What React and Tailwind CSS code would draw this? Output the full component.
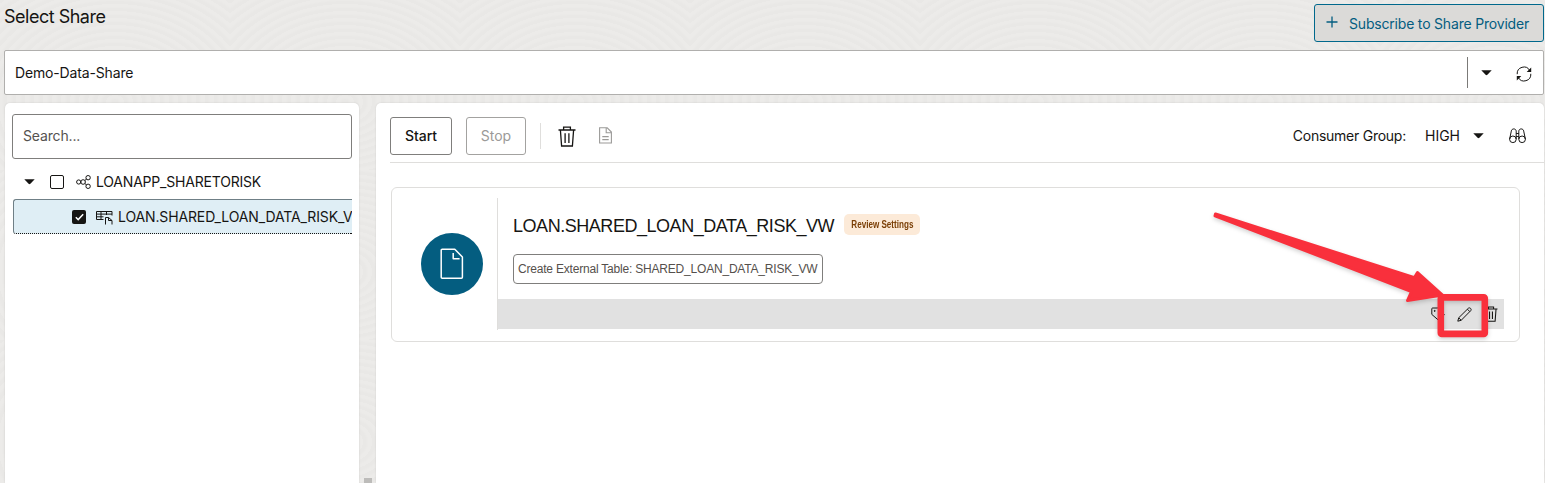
import React from "react";

const inter = "font-[Inter,'Liberation_Sans',sans-serif]";
const helv = "font-['Liberation_Sans',Arial,sans-serif]";

function Caret() {
  return (
    <svg width="11" height="6" viewBox="0 0 11 6" className="block shrink-0">
      <path d="M0.3 0.2h10.400L6.400 4.800q-.9.9-1.800 0z" fill="#161513" />
    </svg>
  );
}

function TrashIcon({ w, h, stroke = 1.3 }) {
  return (
    <svg width={w} height={h} viewBox="0 0 18 21" fill="none" stroke="#161513" strokeWidth={stroke} className="block shrink-0">
      <path d="M0.5 4h17M5.6 4V1.2h6.8V4M2.4 4l1.2 16h10.8l1.2-16M7.1 7.3v9.6M10.9 7.3v9.6" />
    </svg>
  );
}

function RefreshIcon() {
  return (
    <svg width="16" height="16" viewBox="0 0 16 16" fill="none" stroke="#161513" strokeWidth="1" className="block shrink-0">
      <path d="M1.2 8.2A6.7 6.7 0 0 1 13.8 4.6M14.8 7.8A6.7 6.7 0 0 1 2.2 11.4" />
      <path d="M15.200 1.400v4.500h-4.500zM.8 14.600v-4.500h4.500z" fill="#161513" stroke="none" />
    </svg>
  );
}

function ShareIcon() {
  return (
    <svg width="15" height="14" viewBox="0 0 15 14" fill="none" stroke="#161513" strokeWidth="1" className="block shrink-0">
      <circle cx="2.700" cy="7" r="2.100" />
      <circle cx="7.100" cy="7" r="2.300" />
      <circle cx="12.100" cy="2.700" r="2.200" />
      <circle cx="12.100" cy="11.300" r="2.200" />
      <path d="M8.800 5.500l1.700-1.400M8.800 8.500l1.700 1.400" />
    </svg>
  );
}

function TableIcon() {
  return (
    <svg width="17" height="15" viewBox="0 0 17 15" fill="none" stroke="#161513" strokeWidth="1" className="block shrink-0">
      <path d="M7.500 9.500H.500V1.500h15.500v4M.500 4.100h15.500M.500 6.800h7M5 1.500v8M10.500 1.500v3.500" />
      <path d="M9.500 14.500V7.500h3l3.500 3v4M12.500 7.500v3H16" />
    </svg>
  );
}

function DocIcon() {
  return (
    <svg width="13" height="17" viewBox="0 0 13 17" fill="none" stroke="#9b9a98" strokeWidth="1.1" className="block shrink-0">
      <path d="M.6.8h7.6l4.2 4.2v11H.6zM7.2.8v5h5.2M3.3 9.6h6.4M3.3 12.6h6.4" />
    </svg>
  );
}

function BinocularsIcon() {
  return (
    <svg width="17" height="16" viewBox="0 0 17 16" fill="none" stroke="#161513" strokeWidth="1" className="block shrink-0">
      <circle cx="3.900" cy="11.300" r="3.300" />
      <circle cx="13.100" cy="11.300" r="3.300" />
      <path d="M.6 11.2L2.3 3.1C2.6.2 7 .2 7.2 3.1v8M16.4 11.2L14.7 3.1C14.4.2 10 .2 9.8 3.1v8M7.2 5.500h2.6M7.2 8.500h2.6" />
    </svg>
  );
}

function TagIcon() {
  return (
    <svg width="15" height="15" viewBox="0 0 15 15" fill="none" stroke="#161513" strokeWidth="1" className="block shrink-0">
      <path d="M1.600 1h5.100l6.700 6.6-5.700 5.8L.8 7.400V1.800q0-.8.8-.8z" />
      <circle cx="3.700" cy="3.900" r=".5" fill="#161513" />
    </svg>
  );
}

function PencilIcon() {
  return (
    <svg width="15" height="15" viewBox="0 0 15 15" fill="none" stroke="#161513" strokeWidth="1" strokeLinejoin="round" className="block shrink-0">
      <path d="M.8 14.200l.9-3.400L11.300 1.300c1.500-1.400 3.800.9 2.400 2.400l-9.500 9.600zM10.400 2.200l2.400 2.400M1.700 10.800l2.500 2.500" />
    </svg>
  );
}

function FileIcon() {
  return (
    <svg width="24" height="32" viewBox="0 0 24 32" fill="none" stroke="#fff" strokeWidth="1.5" strokeLinejoin="round" className="block">
      <path d="M2.2 1.2h12.6L22.4 9v20.200a1 1 0 0 1-1 1H2.200a1 1 0 0 1-1-1V2.2a1 1 0 0 1 1-1zM13.2 5v5.8h6.4" />
    </svg>
  );
}

function Annotation() {
  return (
    <svg width="290" height="140" viewBox="0 0 290 140" className="absolute left-[831px] top-[102px] pointer-events-none drop-shadow-[0_2px_2px_rgba(0,0,0,0.18)]">
      <path d="M8.500 9L207.500 72.600L210.500 67.500L235.500 90L200.500 95.500L204.500 86.500L8 10.800Z" fill="#f9303c" stroke="#f9303c" strokeWidth="3" strokeLinejoin="round" />
      <rect x="233.800" y="92.400" width="44" height="36.500" rx="1" fill="none" stroke="#f9303c" strokeWidth="6.600" />
    </svg>
  );
}

export default function App() {
  return (
    <div className={`${inter} flex h-[483px] w-[1545px] flex-col overflow-hidden bg-[#ecebe9] bg-[repeating-radial-gradient(ellipse_90px_70px_at_50%_60%,rgba(0,0,0,0.010)_0_3px,transparent_6px_9px)] bg-[length:230px_170px] text-[#161513]`}>
      <header className="flex h-[50px] shrink-0 items-start justify-between pl-1 pr-px">
        <h1 className="mt-[5px] text-[18px] leading-6 tracking-[-0.5px]">Select Share</h1>
        <button className="mt-1 flex h-[38px] w-[230px] items-center rounded-[3px] border border-[#00688c] bg-[#dbdad8] pl-[11px] text-[14px] text-[#045d80]">
          <svg width="12" height="12" viewBox="0 0 12 12" className="mb-0.5 mr-[11px]"><path d="M6 .5v11M.5 6h11" stroke="#045d80" strokeWidth="1.3" /></svg>
          <span className="whitespace-nowrap tracking-[-0.19px]">Subscribe to Share Provider</span>
        </button>
      </header>

      <div className="ml-1 mr-px flex h-[45px] shrink-0 items-center rounded-[2px] border border-[#b0afad] bg-white pl-2.5">
        <span className="text-[14px] tracking-[-0.15px]">Demo-Data-Share</span>
        <div className="ml-auto mr-[13px] h-[31px] w-px bg-[#7b7a78]" />
        <Caret />
        <div className="ml-6 mr-[11px] mt-0.5"><RefreshIcon /></div>
      </div>

      <main className="mt-2 flex min-h-0 flex-1 pl-[5px] pr-px">
        <aside className="h-full w-[354px] shrink-0 rounded-t-[5px] bg-white pl-[7px] pr-2 pt-[11px] shadow-[0_0_2px_rgba(0,0,0,0.12)]">
          <div className="flex h-[45px] w-[340px] items-center rounded-[3px] border border-[#7f7e7c] pb-0.5 pl-2.5 text-[14px] tracking-[-0.15px] text-[#55524f]">Search...</div>
          <div className="flex h-10 items-center pt-[6px] pl-3">
            <Caret />
            <div className="ml-[15px] h-3.5 w-3.5 rounded-[2px] border-[1.500px] border-[#161513]" />
            <div className="ml-3"><ShareIcon /></div>
            <span className="mb-px ml-[5px] text-[14px] tracking-[-0.2px]">LOANAPP_SHARETORISK</span>
          </div>
          <div className="ml-px flex h-[35px] w-[339px] items-center overflow-hidden rounded-l-[3px] border border-b border-r-0 border-[#6f7f86] border-b-[#161513] [border-bottom-style:dotted] bg-[#dfeef5] pl-[58px]">
            <div className="flex h-3.5 w-3.5 shrink-0 items-center justify-center rounded-[2px] bg-[#161513]">
              <svg width="9" height="8" viewBox="0 0 9 8"><path d="M.8 4.2l2.400 2.400L8.200 1.300" fill="none" stroke="#fff" strokeWidth="1.500" /></svg>
            </div>
            <div className="ml-2.5 mt-0.5"><TableIcon /></div>
            <span className="ml-[5px] whitespace-nowrap text-[14px] tracking-[-0.13px]">LOAN.SHARED_LOAN_DATA_RISK_V</span>
          </div>
        </aside>

        <div className="flex w-[17px] shrink-0 items-end justify-center"><div className="h-[5px] w-2 bg-[#bdbcba]" /></div>

        <section className="relative min-w-0 flex-1 rounded-t-[5px] bg-white pl-3.5 pt-3.5 shadow-[0_0_2px_rgba(0,0,0,0.12)]">
          <div className="flex h-[46px] items-start border-b border-[#dfdedc]">
            <button className="h-[38px] w-[62px] rounded-[3px] border border-[#7f7e7c] pb-0.5 text-[14px] font-medium">Start</button>
            <button className="ml-3.5 h-[38px] w-[60px] rounded-[3px] border border-[#a3a2a0] pb-0.5 text-[14px] text-[#9b9a98]">Stop</button>
            <div className="ml-3.5 mt-1.5 h-[26px] w-px bg-[#dfdedc]" />
            <div className="ml-[17px] mt-[9px]"><TrashIcon w="18" h="21" /></div>
            <div className="ml-[23px] mt-2.5"><DocIcon /></div>
            <div className="ml-auto mr-[18px] flex h-[38px] items-center text-[14px]">
              <span className="mb-0.5 tracking-[-0.25px]">Consumer Group:</span>
              <span className="mb-0.5 ml-[19px] mr-[13px]">HIGH</span>
              <Caret />
              <div className="ml-[25px]"><BinocularsIcon /></div>
            </div>
          </div>

          <article className={`${helv} ml-px mt-6 flex h-[155px] w-[1129px] rounded-[6px] border border-[#dfdedc] pl-3 pt-2.5`}>
            <div className="flex h-[132px] w-[94px] items-center justify-center border-r border-[#dfdedc] pl-0.5">
              <div className="flex h-[62px] w-[62px] items-center justify-center rounded-full bg-[#045d80]"><FileIcon /></div>
            </div>
            <div className="flex h-[131px] w-[1006px] flex-col">
              <div className="flex h-[56px] items-center pl-[15px]">
                <span className="w-[321px] whitespace-nowrap text-[18px] tracking-[-0.46px]">LOAN.SHARED_LOAN_DATA_RISK_VW</span>
                <span className="ml-2.5 mb-[3px] flex h-[21px] w-[76px] items-center justify-center rounded-[5px] bg-[#fcead8] text-[10px] font-bold text-[#7a3e05]">
                  <span className="shrink-0 scale-x-[0.81] whitespace-nowrap">Review Settings</span>
                </span>
              </div>
              <div className="ml-[15px] flex h-[30px] w-[310px] items-center whitespace-nowrap rounded-[4px] border border-[#7f7e7c] pl-1 text-[12px] tracking-[-0.2px] text-[#55504c]">Create External Table: SHARED_LOAN_DATA_RISK_VW</div>
              <div className="mt-auto flex h-[30px] items-center justify-end bg-[#e1e1e1] pr-[6px]">
                <TagIcon />
                <div className="ml-[11px]"><PencilIcon /></div>
                <div className="ml-3"><TrashIcon w="14" h="16" stroke={1.4} /></div>
              </div>
            </div>
          </article>
          <Annotation />
        </section>
      </main>
    </div>
  );
}
